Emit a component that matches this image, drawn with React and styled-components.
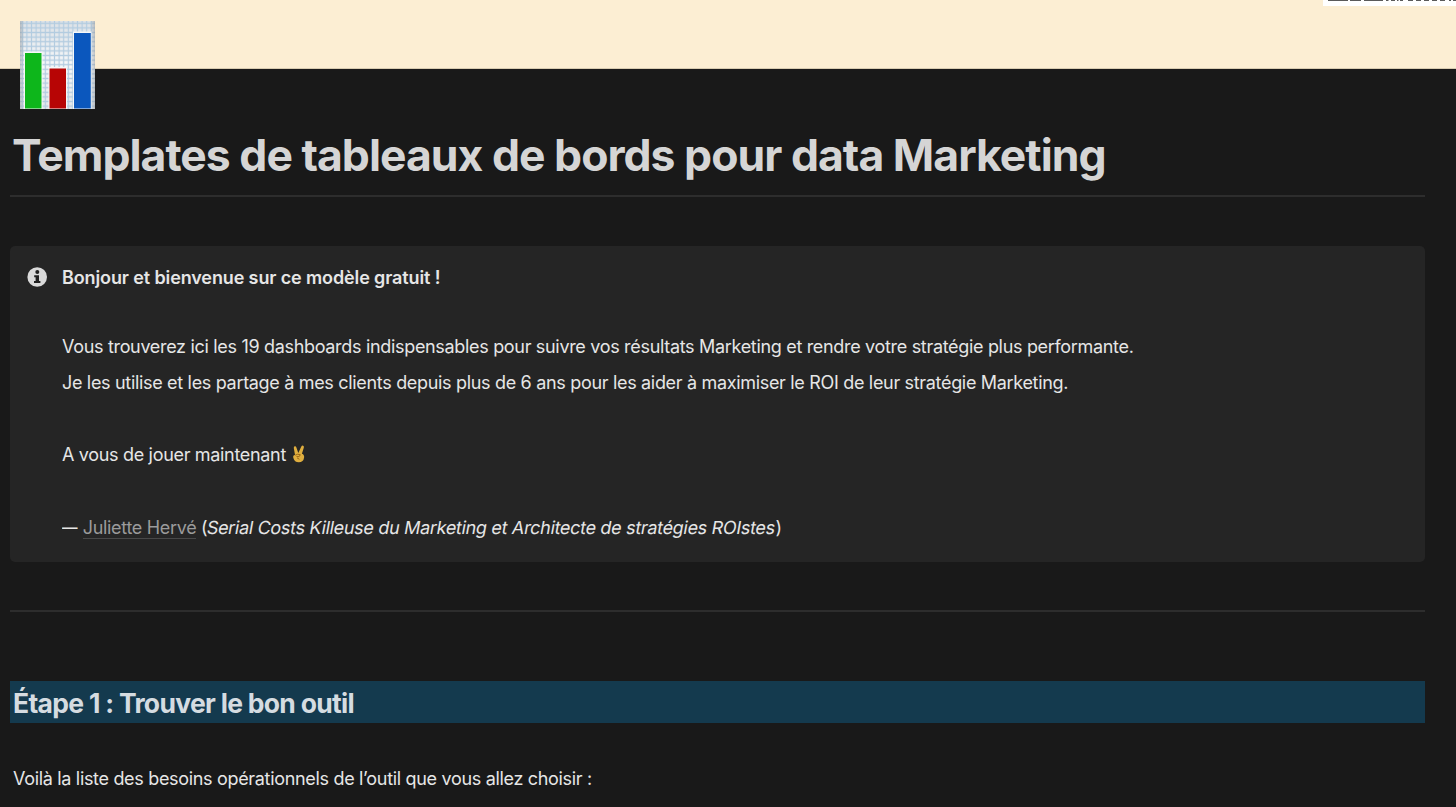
import styled, { createGlobalStyle } from "styled-components"

const GlobalStyle = createGlobalStyle`
    * {
        box-sizing: border-box;
    }

    body {
        margin: 0;
        background-color: #191919;
        color: #e6e6e6;
        font-family: Inter, sans-serif;
        overflow: hidden;
    }
`;

const Page = styled.div`
    height: 807px;
    overflow: hidden;
`;

const Cover = styled.div`
    height: 69px;
    display: flex;
    justify-content: flex-end;
    background-color: #fceed3;
    border-bottom: 1px solid #d8cbb0;
`;

const CoverAction = styled.div`
    width: 133px;
    height: 6px;
    background-color: white;
    overflow: hidden;
`;

const Clipped = styled.svg`
    display: block;
    width: 133px;
    height: 2px;
`;

const Content = styled.main`
    width: 1415px;
    margin-left: 10px;
`;

const PageIcon = styled.svg`
    display: block;
    position: relative;
    width: 75px;
    height: 88px;
    margin: -48px 0 0 10px;
`;

const Title = styled.h1`
    margin: 16px 0 0;
    padding-left: 2px;
    color: #d5d5d5;
    font-size: 44.5px;
    line-height: 60px;
    font-weight: 700;
    white-space: nowrap;
    letter-spacing: -0.98px;
`;

const Divider = styled.hr`
    height: 2px;
    margin: ${({ $margin }) => $margin};
    border: none;
    background-color: #2d2d2d;
`;

const Callout = styled.section`
    display: flex;
    height: 316px;
    padding: 14px 17px;
    border-radius: 5px;
    background-color: #252525;
`;

const InfoIcon = styled.svg`
    flex: none;
    width: 20px;
    height: 20px;
    margin: 7px 15px 0 0;
`;

const Text = styled.p`
    height: 36px;
    margin: ${({ $margin }) => $margin || 0};
    font-size: 18px;
    line-height: 36px;
    font-weight: ${({ $bold }) => ($bold ? 600 : 400)};
    letter-spacing: ${({ $bold }) => ($bold ? "-0.12px" : "-0.32px")};
    white-space: nowrap;
`;

const Author = styled.a`
    color: #9b9b9b;
    border-bottom: 1px solid #484848;
`;

const Slanted = styled.em`
    display: inline-block;
    font-style: normal;
    letter-spacing: -0.31px;
    transform: skewX(-10deg);
`;

const Dash = styled.span`
    display: inline-block;
    width: 16px;
    transform: scaleX(0.86);
    transform-origin: left;
`;

const Hand = styled.svg`
    width: 14px;
    height: 18px;
    margin-left: 1px;
    vertical-align: -2px;
`;

const StepTitle = styled.h2`
    height: 42px;
    margin: 0;
    padding-left: 3px;
    background-color: #143a4e;
    color: #d5dce1;
    font-size: 26.5px;
    line-height: 44px;
    font-weight: 650;
    letter-spacing: -0.7px;
`;

const ChartIcon = () => (
  <PageIcon viewBox="0 0 75 88">
    <defs>
      <pattern id="grid" width="4.6" height="4.6" patternUnits="userSpaceOnUse">
        <path d="M0 2.3H4.6M2.3 0V4.6" stroke="#b3cce0" strokeWidth="1.2" />
      </pattern>
      <linearGradient id="paper" x2="0" y2="1">
        <stop offset="0" stopColor="#dde2e6" />
        <stop offset="0.5" stopColor="#f7f8f9" />
        <stop offset="1" stopColor="#e3e6e9" />
      </linearGradient>
      <linearGradient id="edges">
        <stop offset="0" stopColor="#8e9499" stopOpacity="0.5" />
        <stop offset="0.06" stopColor="#8e9499" stopOpacity="0" />
        <stop offset="0.93" stopColor="#8e9499" stopOpacity="0" />
        <stop offset="1" stopColor="#8e9499" stopOpacity="0.5" />
      </linearGradient>
    </defs>
    <rect width="75" height="88" fill="url(#paper)" />
    <rect width="75" height="88" fill="url(#grid)" />
    <rect width="75" height="88" fill="url(#edges)" />
    <path d="M4 30.500h18.500v57.500H4zM28.500 46h18.500v42h-18.500zM53 10.500h18.500v77.500H53z" fill="#f5f7f8" />
    <path d="M5 32h16.500v55.500H5z" fill="#0db61b" />
    <path d="M29.500 47.500H46v40H29.500z" fill="#b70505" />
    <path d="M54 12h16.800v75.500H54z" fill="#0b57bd" />
  </PageIcon>
)

const Victory = () => (
  <Hand viewBox="0 0 14 18">
    <path d="M3 10 1.800 3.100Q1.600 1.500 2.900 1.300 4 1.200 4.400 2.600L6.300 8 9.200 1.700Q10 .2 11.200.7 12.300 1.200 11.800 2.700L9.900 8.800Q12.500 9.700 12.100 12.500 11.500 17.300 6.800 17.300 2.400 17.300 1.300 12.800.7 10.200 3 10z" fill="#dfae3f" />
    <path d="M3.200 10.200Q5.600 8.500 8.300 9.700L7.100 11.700 4.500 11.500M5 12.800 7.400 14.300" fill="none" stroke="#9d6816" strokeWidth="1" />
  </Hand>
)

const App = () => {
  return (
    <Page>
      <GlobalStyle />
      <Cover>
        <CoverAction>
          {/* lower edge of the control scrolled past the top */}
          <Clipped viewBox="0 0 133 2">
            <path d="M5 .5h20M27 .5h11M41 .5h19M63 .5h2.500M68 .5h4M74 .5h1.500M77 .5h3M85 .5h5M93 .5h5M101 .5h5M109 .5h5M117 .5h5M126 .5h2M130 .5h3" stroke="#5a5a5a" strokeWidth="1.200" />
          </Clipped>
        </CoverAction>
      </Cover>
      <Content>
        <ChartIcon />
        <Title>Templates de tableaux de bords pour data Marketing</Title>
        <Divider $margin="10px 0 49px" />
        <Callout>
          <InfoIcon viewBox="0 0 20 20">
            <circle cx="10.200" cy="10" r="9.800" fill="#dadada" />
            <circle cx="10.300" cy="5" r="2" fill="#202020" />
            <path d="M7.200 8.300h4.800v5.600h1.400v2H7v-2h1.600v-3.600H7.200z" fill="#202020" />
          </InfoIcon>
          <div>
            <Text $bold>Bonjour et bienvenue sur ce modèle gratuit !</Text>
            <Text $margin="33px 0 0">Vous trouverez ici les 19 dashboards indispensables pour suivre vos résultats Marketing et rendre votre stratégie plus performante.</Text>
            <Text>Je les utilise et les partage à mes clients depuis plus de 6 ans pour les aider à maximiser le ROI de leur stratégie Marketing.</Text>
            <Text $margin="36px 0 37px">A vous de jouer maintenant <Victory /></Text>
            <Text><Dash>—</Dash> <Author>Juliette Hervé</Author> (<Slanted>Serial Costs Killeuse du Marketing et Architecte de stratégies ROIstes</Slanted>)</Text>
          </div>
        </Callout>
        <Divider $margin="48px 0 69px" />
        <StepTitle>Étape 1 : Trouver le bon outil</StepTitle>
        <Text $margin="38px 0 0 3px">Voilà la liste des besoins opérationnels de l’outil que vous allez choisir :</Text>
      </Content>
    </Page>
  )
}

export default App
